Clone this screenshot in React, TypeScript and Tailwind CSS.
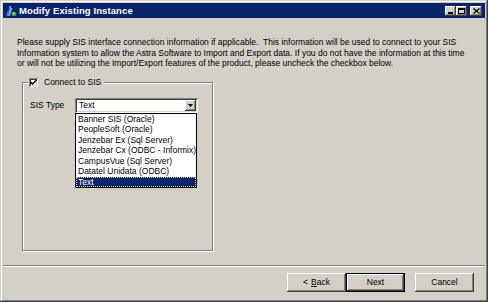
import React from 'react';

const raised =
  'shadow-[inset_-1px_-1px_#404040,inset_1px_1px_#ffffff,inset_-2px_-2px_#808080,inset_2px_2px_#d4d0c8]';
const sunken =
  'shadow-[inset_1px_1px_#808080,inset_-1px_-1px_#ffffff,inset_2px_2px_#404040,inset_-2px_-2px_#d4d0c8]';

const options = [
  'Banner SIS (Oracle)',
  'PeopleSoft (Oracle)',
  'Jenzebar Ex (Sql Server)',
  'Jenzebar Cx (ODBC - Informix)',
  'CampusVue (Sql Server)',
  'Datatel Unidata (ODBC)',
  'Text',
];

function TitleBar() {
  return (
    <div className="h-[15px] bg-[#0a246a] flex items-center pl-[2px] pr-[3px]">
      {/* app icon */}
      <svg width="12" height="12" viewBox="0 0 12 12" className="shrink-0">
        <path d="M4 1 L6 1 L6 3 L7.5 3 L5 11 L2.5 11 L4.5 4 Z" fill="#6aa6f0" />
        <path d="M2 7 L4 5 L3 11 L1 11 Z" fill="#3b6fd0" />
        <circle cx="9" cy="9" r="2.3" fill="#3fb04a" />
        <circle cx="8.4" cy="8.4" r="0.9" fill="#a8e8a0" />
      </svg>
      <span className="ml-[2px] text-white font-bold text-[9.5px] leading-none tracking-[0.1px]">
        Modify Existing Instance
      </span>
      <div className="ml-auto flex items-center">
        <div className={`w-[11px] h-[10px] bg-[#d4d0c8] ${raised} flex items-end justify-center pb-[2px]`}>
          <div className="w-[5px] h-[2px] bg-black ml-[-1px]" />
        </div>
        <div className={`w-[11px] h-[10px] bg-[#d4d0c8] ${raised} flex items-center justify-center`}>
          <div className="w-[7px] h-[6px] border border-black border-t-2" />
        </div>
        <div className={`ml-[3px] w-[12px] h-[10px] bg-[#d4d0c8] ${raised} flex items-center justify-center`}>
          <svg width="7" height="6" viewBox="0 0 7 6">
            <path d="M0.5 0.5 L6.5 5.5 M6.5 0.5 L0.5 5.5" stroke="black" strokeWidth="1.3" />
          </svg>
        </div>
      </div>
    </div>
  );
}

function ComboBox() {
  return (
    <div className="relative w-[123px]">
      <div className={`h-[15px] bg-white ${sunken} flex items-center pl-[4px] pr-[2px]`}>
        <span className="text-[8.5px] leading-none">Text</span>
        <div className={`ml-auto w-[11px] h-[11px] bg-[#d4d0c8] ${raised} flex items-center justify-center`}>
          <svg width="5" height="3" viewBox="0 0 5 3">
            <path d="M0 0 L5 0 L2.5 3 Z" fill="black" />
          </svg>
        </div>
      </div>
      {/* open dropdown list */}
      <div className="absolute left-0 top-full w-[122px] bg-white border border-black z-10">
        {options.map((o) => (
          <div
            key={o}
            className={`h-[10.5px] leading-[10.5px] pl-[2px] text-[8.5px] whitespace-nowrap ${
              o === 'Text' ? 'bg-[#0a246a] text-white outline-1 outline-dotted outline-[#f0d070] -outline-offset-1' : ''
            }`}
          >
            {o}
          </div>
        ))}
      </div>
    </div>
  );
}

function WizButton({ children, isDefault }: { children: React.ReactNode; isDefault?: boolean }) {
  return (
    <button
      className={`w-[59px] h-[19px] bg-[#d4d0c8] text-[8.5px] leading-none flex items-center justify-center ${
        isDefault ? 'border border-black' : ''
      } ${raised}`}
    >
      {children}
    </button>
  );
}

export default function App() {
  return (
    <div
      className={`w-[488px] h-[302px] bg-[#d4d0c8] p-[3px] flex flex-col text-black font-['Liberation_Sans',Arial,sans-serif] shadow-[inset_-1px_-1px_#404040,inset_1px_1px_#d4d0c8,inset_-2px_-2px_#808080,inset_2px_2px_#ffffff]`}
    >
      <TitleBar />

      <p className="mt-[19px] ml-[14px] text-[8.5px] leading-[10.5px] whitespace-nowrap">
        Please supply SIS interface connection information if applicable.{'\u00a0'} This information will be used to
        connect to your SIS
        <br />
        Information system to allow the Astra Software to Import and Export data. If you do not have the information
        at this time
        <br />
        or will not be utilizing the Import/Export features of the product, please uncheck the checkbox below.
      </p>

      <fieldset className="mt-[9px] ml-[19px] w-[191px] h-[173px] border border-[#808080] shadow-[inset_1px_1px_#ffffff,1px_1px_#ffffff]">
        <legend className="ml-[5px] px-[1px] bg-[#d4d0c8] flex items-center h-[10px]">
          <div className={`w-[9px] h-[9px] bg-white ${sunken} flex items-center justify-center`}>
            <svg width="7" height="7" viewBox="0 0 7 7">
              <path d="M0.5 3 L2.5 5 L6.5 1" stroke="black" strokeWidth="1.5" fill="none" />
            </svg>
          </div>
          <span className="ml-[6px] mr-[2px] text-[8.5px] leading-none">Connect to SIS</span>
        </legend>

        <div className="mt-[10px] pl-[7px] flex items-center">
          <span className="w-[45px] text-[8.5px] leading-none">SIS Type</span>
          <ComboBox />
        </div>
      </fieldset>

      <div className="mt-auto h-[2px] border-t border-[#808080] border-b border-b-white" />

      <div className="mt-[6px] mb-[7px] mr-[11px] flex justify-end">
        <WizButton>
          &lt; <span className="underline ml-[3px]">B</span>ack
        </WizButton>
        <WizButton isDefault>Next</WizButton>
        <div className="w-[10px]" />
        <WizButton>Cancel</WizButton>
      </div>
    </div>
  );
}
